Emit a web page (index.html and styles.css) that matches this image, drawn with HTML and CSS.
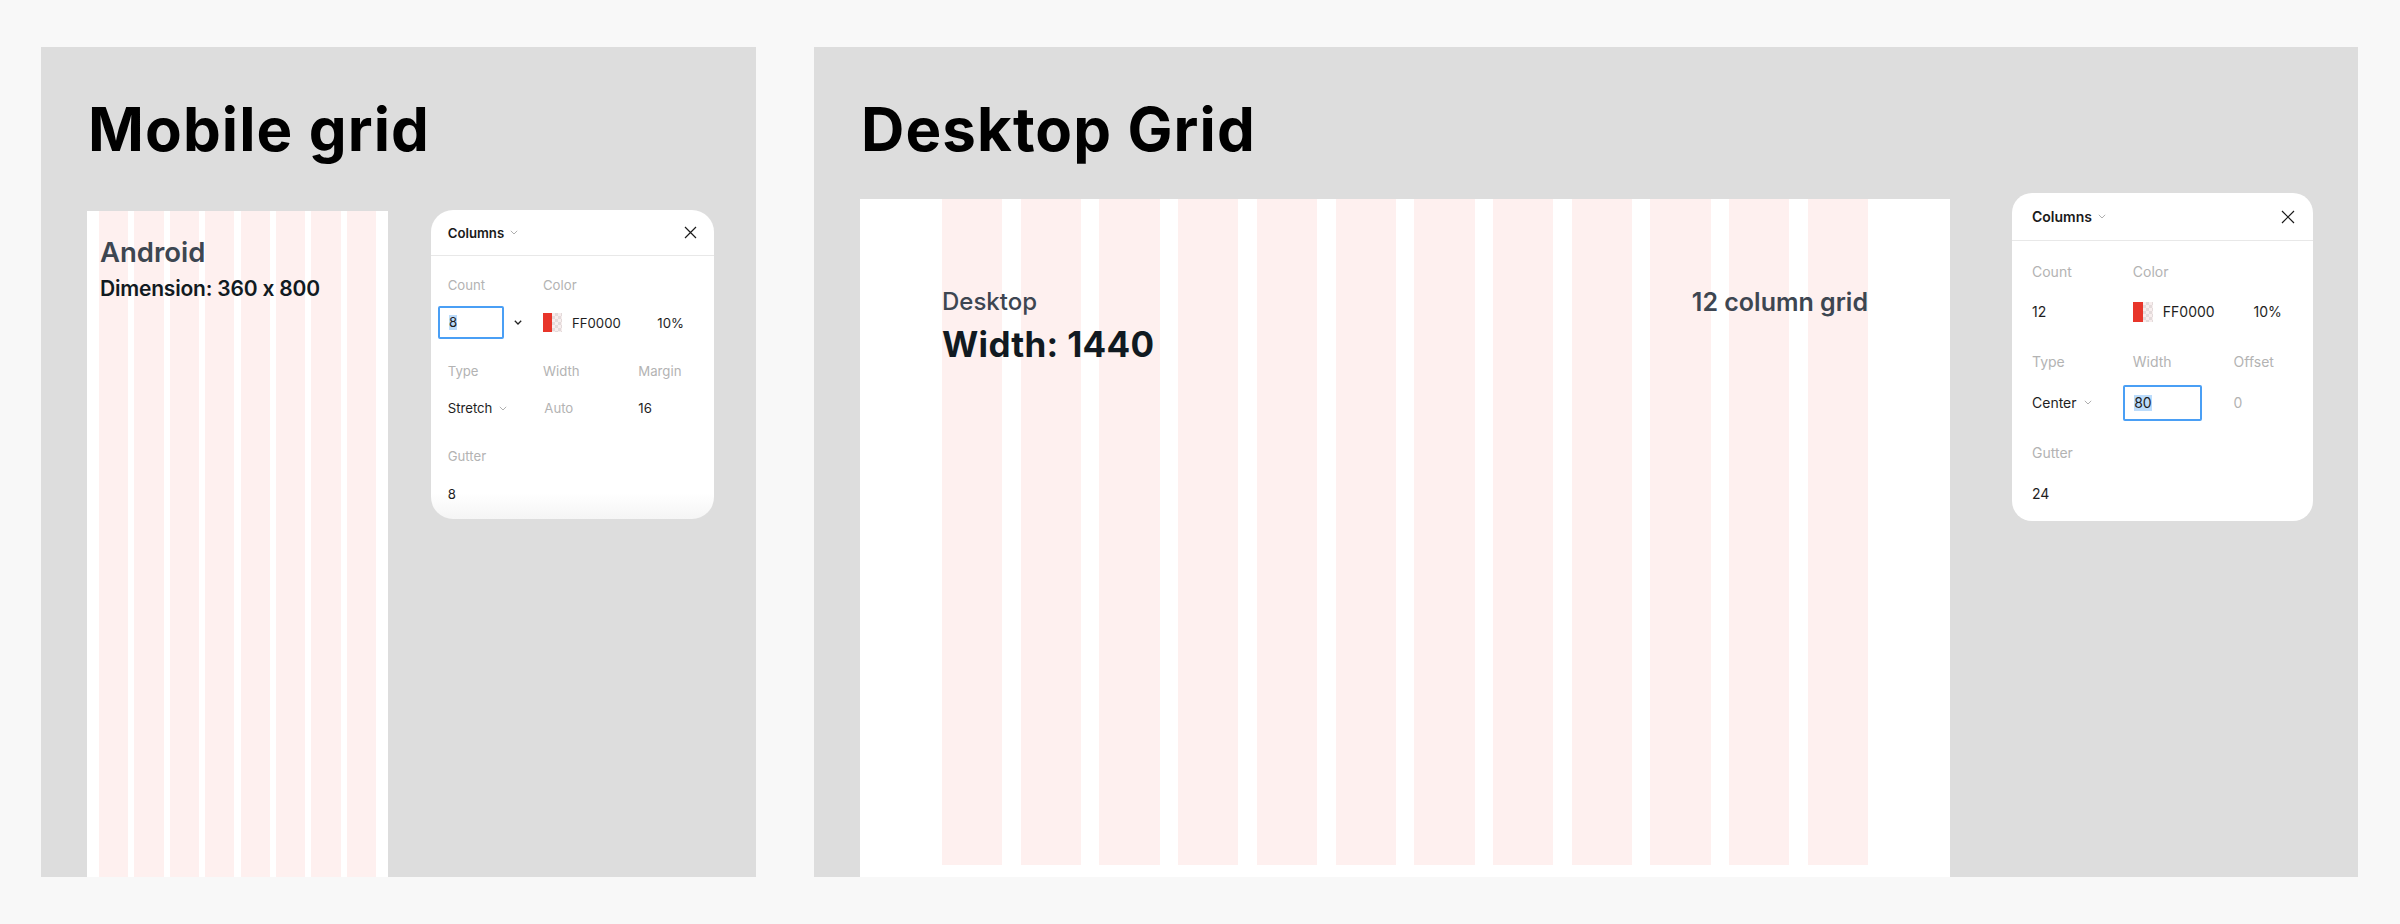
FILE: index.html
```html
<!DOCTYPE html>
<html lang="en">
<head>
<meta charset="utf-8">
<title>Grids</title>
<link rel="stylesheet" href="styles.css">
</head>
<body>
<main class="page">
  <section class="board board--mobile">
    <h1 class="board-title">Mobile grid</h1>
    <div class="board-row board-row--mobile">
      <div class="frame frame--mobile">
        <div class="cols cols--mobile">
          <span class="col"></span><span class="col"></span><span class="col"></span><span class="col"></span>
          <span class="col"></span><span class="col"></span><span class="col"></span><span class="col"></span>
        </div>
        <div class="frame-content frame-content--mobile">
          <div class="m-name">Android</div>
          <div class="m-dim">Dimension: 360 x 800</div>
        </div>
      </div>
      <div class="panel panel--mobile">
        <div class="panel-head">
          <span class="panel-title">Columns
            <svg class="chev" width="8" height="5" viewBox="0 0 8 5"><path d="M0.8 0.8L4 4L7.2 0.8" fill="none" stroke="#a6a6a6" stroke-width="0.9"/></svg>
          </span>
          <svg class="close" width="13" height="13" viewBox="0 0 13 13"><path d="M1 1L12 12M12 1L1 12" fill="none" stroke="#1a1a1a" stroke-width="1.2"/></svg>
        </div>
        <div class="panel-body">
          <div class="psec">
            <span class="plabel">Count</span>
            <span class="plabel">Color</span>
            <span class="plabel"></span>
            <span class="pval"><span class="input input--mobile"><span class="sel">8</span></span><svg class="chev-dark" width="8" height="5" viewBox="0 0 8 5"><path d="M0.8 0.8L4 4L7.2 0.8" fill="none" stroke="#222" stroke-width="1.3"/></svg></span>
            <span class="pval"><span class="swatch"><span class="swatch-red"></span><span class="swatch-check"></span></span>FF0000</span>
            <span class="pval pct">10%</span>
          </div>
          <div class="psec">
            <span class="plabel">Type</span>
            <span class="plabel">Width</span>
            <span class="plabel">Margin</span>
            <span class="pval">Stretch<svg class="chev" width="8" height="5" viewBox="0 0 8 5"><path d="M0.8 0.8L4 4L7.2 0.8" fill="none" stroke="#a6a6a6" stroke-width="0.9"/></svg></span>
            <span class="pval muted">Auto</span>
            <span class="pval">16</span>
          </div>
          <div class="psec">
            <span class="plabel">Gutter</span>
            <span class="plabel"></span>
            <span class="plabel"></span>
            <span class="pval">8</span>
            <span class="pval"></span>
            <span class="pval"></span>
          </div>
        </div>
      </div>
    </div>
  </section>

  <section class="board board--desktop">
    <h1 class="board-title">Desktop Grid</h1>
    <div class="board-row board-row--desktop">
      <div class="frame frame--desktop">
        <div class="cols cols--desktop">
          <span class="col"></span><span class="col"></span><span class="col"></span><span class="col"></span>
          <span class="col"></span><span class="col"></span><span class="col"></span><span class="col"></span>
          <span class="col"></span><span class="col"></span><span class="col"></span><span class="col"></span>
        </div>
        <div class="frame-content frame-content--desktop">
          <div class="d-head">
            <span class="d-name">Desktop</span>
            <span class="d-note">12 column grid</span>
          </div>
          <div class="d-width">Width: 1440</div>
        </div>
      </div>
      <div class="panel panel--desktop">
        <div class="panel-head">
          <span class="panel-title">Columns
            <svg class="chev" width="8" height="5" viewBox="0 0 8 5"><path d="M0.8 0.8L4 4L7.2 0.8" fill="none" stroke="#a6a6a6" stroke-width="0.9"/></svg>
          </span>
          <svg class="close" width="14" height="14" viewBox="0 0 14 14"><path d="M1 1L13 13M13 1L1 13" fill="none" stroke="#1a1a1a" stroke-width="1.2"/></svg>
        </div>
        <div class="panel-body">
          <div class="psec">
            <span class="plabel">Count</span>
            <span class="plabel">Color</span>
            <span class="plabel"></span>
            <span class="pval">12</span>
            <span class="pval"><span class="swatch"><span class="swatch-red"></span><span class="swatch-check"></span></span>FF0000</span>
            <span class="pval pct">10%</span>
          </div>
          <div class="psec">
            <span class="plabel">Type</span>
            <span class="plabel">Width</span>
            <span class="plabel">Offset</span>
            <span class="pval">Center<svg class="chev" width="8" height="5" viewBox="0 0 8 5"><path d="M0.8 0.8L4 4L7.2 0.8" fill="none" stroke="#a6a6a6" stroke-width="0.9"/></svg></span>
            <span class="pval"><span class="input input--desktop"><span class="sel">80</span></span></span>
            <span class="pval muted">0</span>
          </div>
          <div class="psec">
            <span class="plabel">Gutter</span>
            <span class="plabel"></span>
            <span class="plabel"></span>
            <span class="pval">24</span>
            <span class="pval"></span>
            <span class="pval"></span>
          </div>
        </div>
      </div>
    </div>
  </section>
</main>
</body>
</html>
```

FILE: styles.css
```css
* { box-sizing: border-box; }

html, body {
  margin: 0;
  background: #f8f8f8;
  font-family: "Inter", "Noto Sans", sans-serif;
}

.page {
  display: flex;
  gap: 58px;
  height: 924px;
  padding: 47px 42px 47px 41px;
}

.board {
  background: #dddddd;
  overflow: hidden;
  display: flex;
  flex-direction: column;
  padding: 46px 0 0 46px;
}
.board--mobile { width: 715px; flex: none; }
.board--desktop { flex: 1; }

.board-title {
  margin: 0 0 0 1px;
  font-size: 60px;
  line-height: 72px;
  font-weight: 700;
  color: #000;
  letter-spacing: 1.1px;
}

.board-row {
  flex: 1;
  min-height: 0;
  display: flex;
  align-items: flex-start;
}
.board-row--mobile { margin-top: 45px; gap: 43px; }
.board-row--desktop { margin-top: 28px; gap: 62px; }

/* frames */
.frame {
  align-self: stretch;
  background: #fff;
  display: grid;
  grid-template: 1fr / 1fr;
}
.frame--mobile { width: 301px; margin-top: 1px; }
.frame--desktop { width: 1090px; margin-top: 6px; }

.cols {
  grid-area: 1 / 1;
  display: flex;
}
.cols--mobile { gap: 6.3px; padding: 0 12px; }
.cols--desktop { gap: 18.4px; padding: 0 82px 12px; }
.col { flex: 1; background: #fef0ef; }

.frame-content { grid-area: 1 / 1; }
.frame-content--mobile { padding: 25px 0 0 13px; }
.frame-content--desktop { padding: 88px 82px 0; }

.m-name {
  font-size: 27.5px;
  line-height: 33px;
  font-weight: 600;
  color: #3d4651;
}
.m-dim {
  margin-top: 7px;
  font-size: 21px;
  line-height: 26px;
  font-weight: 600;
  color: #111a21;
  letter-spacing: -0.2px;
}

.d-head {
  display: flex;
  justify-content: space-between;
  align-items: flex-start;
}
.d-name {
  font-size: 24px;
  line-height: 29px;
  font-weight: 500;
  color: #3d4651;
}
.d-note {
  font-size: 25px;
  line-height: 30px;
  font-weight: 600;
  color: #3d4651;
}
.d-width {
  margin-top: 6.4px;
  font-size: 35px;
  line-height: 42px;
  font-weight: 700;
  color: #111a21;
  letter-spacing: 0.3px;
}

/* panels */
.panel {
  flex: none;
  background: #fff;
  color: #1e1e1e;
  display: flex;
  flex-direction: column;
}
.panel--mobile {
  width: 283px;
  height: 309px;
  border-radius: 22px;
  font-size: 13.2px;
  background: linear-gradient(to bottom, #fff 0, #fff calc(100% - 26px), #f5f5f5 100%);
}
.panel--desktop {
  width: 301px;
  height: 328px;
  border-radius: 20px;
  font-size: 14px;
}

.panel-head {
  display: flex;
  align-items: center;
  justify-content: space-between;
  border-bottom: 1px solid #e8e8e8;
}
.panel--mobile .panel-head { height: 46px; padding: 0 17px 0 16.7px; }
.panel--desktop .panel-head { height: 48px; padding: 0 18px 0 20px; }

.panel-title {
  font-weight: 600;
  color: #1a1a1a;
  display: flex;
  align-items: center;
  gap: 6px;
}
.close { display: block; }

.panel-body { display: flex; flex-direction: column; }
.panel--mobile .panel-body { padding: 19px 0 0 16.7px; gap: 21px; }
.panel--desktop .panel-body { padding: 20px 0 0 20px; gap: 22.3px; }

.psec { display: grid; }
.panel--mobile .psec {
  grid-template-columns: 95.3px 95.3px 1fr;
  grid-template-rows: 20px 34px;
  row-gap: 10.7px;
}
.panel--desktop .psec {
  grid-template-columns: 100.8px 100.8px 1fr;
  grid-template-rows: 20px 36px;
  row-gap: 12.7px;
}

.plabel {
  color: #b3b3b3;
  display: flex;
  align-items: center;
}
.pval {
  display: flex;
  align-items: center;
  color: #1e1e1e;
  white-space: nowrap;
}
.pval .chev { margin-left: 7px; }
.muted { color: #b3b3b3; }
.panel--mobile .pval.muted:nth-child(5) { padding-left: 1.3px; }
.panel--mobile .pct { padding-left: 19px; }
.panel--desktop .pct { padding-left: 20px; }

.swatch {
  display: flex;
  flex: none;
  margin-right: 10px;
}
.panel--mobile .swatch { width: 19px; height: 19px; }
.panel--desktop .swatch { width: 20px; height: 20px; }
.swatch-red { width: 50%; background: #e8352a; }
.swatch-check {
  width: 50%;
  background-color: #f7eded;
  background-image: conic-gradient(#e3dada 25%, transparent 0 50%, #e3dada 0 75%, transparent 0);
  background-size: 6px 6px;
}

.input {
  display: flex;
  align-items: center;
  border: 2px solid #4a9ff5;
  border-radius: 2px;
  padding-left: 9px;
}
.input--mobile { width: 66px; height: 33px; margin-left: -9.7px; }
.input--desktop { width: 79px; height: 36px; margin-left: -9.6px; }
.sel { background: #bcdcfb; line-height: 1.15; }
.chev-dark { margin-left: 10px; }
```
